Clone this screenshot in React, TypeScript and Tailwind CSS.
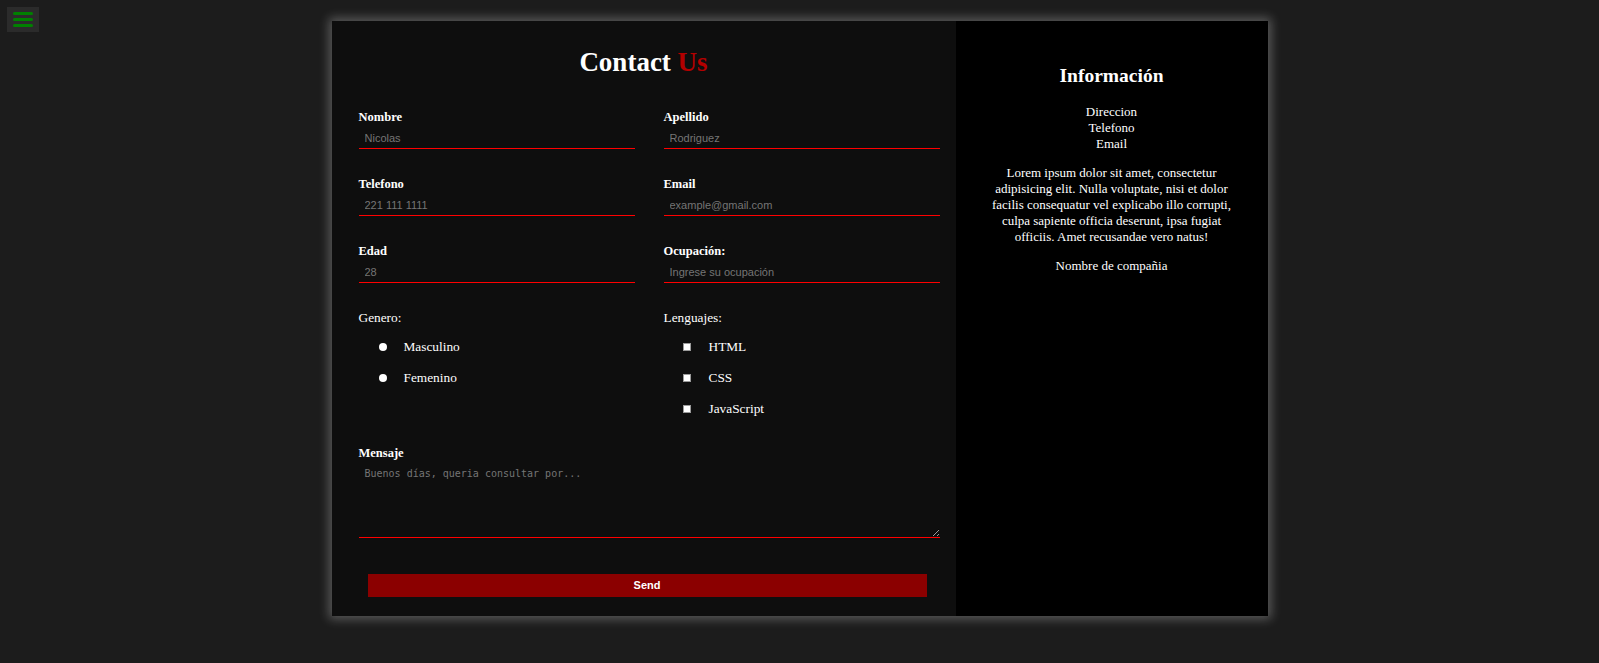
import { useState } from "react";

const fields = [
  { label: "Nombre", placeholder: "Nicolas", type: "text" },
  { label: "Apellido", placeholder: "Rodriguez", type: "text" },
  { label: "Telefono", placeholder: "221 111 1111", type: "tel" },
  { label: "Email", placeholder: "example@gmail.com", type: "email" },
  { label: "Edad", placeholder: "28", type: "number" },
  { label: "Ocupación:", placeholder: "Ingrese su ocupación", type: "text" },
];

function Field({ label, placeholder, type }: { label: string; placeholder: string; type: string }) {
  return (
    <div className="flex flex-col">
      <label className="block text-[12.5px] leading-[15px] font-bold text-white">{label}</label>
      <input
        type={type}
        placeholder={placeholder}
        className="h-[24px] w-full bg-transparent border-b border-[#ff0000] pl-[6px] pt-[3px] text-[11px] text-white font-['Liberation_Sans',Arial,sans-serif] placeholder:text-[#757575] outline-none"
      />
    </div>
  );
}

export default function App() {
  const [genero, setGenero] = useState("");

  return (
    <div className="min-h-screen w-full bg-[#1c1c1c] pt-[21px] pb-[47px] font-['Liberation_Serif','Times_New_Roman',serif]">
      <button className="fixed top-[7px] left-[7px] w-[32px] h-[25px] bg-[#2b2b2b] flex flex-col items-center justify-center gap-[3px]">
        <span className="block w-[20px] h-[3px] rounded-full bg-[#008000]" />
        <span className="block w-[20px] h-[3px] rounded-full bg-[#008000]" />
        <span className="block w-[20px] h-[3px] rounded-full bg-[#008000]" />
      </button>

      <div className="mx-auto w-[936px] h-[595px] flex shadow-[0_0_10px_3px_rgba(255,255,255,0.28)]">
        {/* formulario */}
        <form className="w-[624px] bg-[#0e0e0e] pt-[26px]" onSubmit={(e) => e.preventDefault()}>
          <h1 className="text-center text-[27px] leading-[31px] font-bold text-white">
            Contact <span className="text-[#b30000]">Us</span>
          </h1>

          <div className="pl-[27px] pr-[16px] mt-[32px]">
            <div className="grid grid-cols-2 gap-x-[29px] gap-y-[28px]">
              {fields.map((f) => (
                <Field key={f.label} {...f} />
              ))}
            </div>

            <div className="grid grid-cols-2 gap-x-[29px] mt-[27px]">
              <div>
                <p className="text-[13.33px] leading-[15px] text-white">Genero:</p>
                <div className="mt-[6px]">
                  {["Masculino", "Femenino"].map((g) => (
                    <label key={g} className="flex items-center h-[31px] pl-[20px] gap-[17px] text-[13.33px] text-white">
                      <input
                        type="radio"
                        name="genero"
                        checked={genero === g}
                        onChange={() => setGenero(g)}
                        className="appearance-none w-[8px] h-[8px] rounded-full bg-white"
                      />
                      {g}
                    </label>
                  ))}
                </div>
              </div>
              <div>
                <p className="text-[13.33px] leading-[15px] text-white">Lenguajes:</p>
                <div className="mt-[6px]">
                  {["HTML", "CSS", "JavaScript"].map((l) => (
                    <label key={l} className="flex items-center h-[31px] pl-[19px] gap-[18px] text-[13.33px] text-white">
                      <input
                        type="checkbox"
                        className="appearance-none w-[8px] h-[8px] bg-white border border-[#9a9a9a]"
                      />
                      {l}
                    </label>
                  ))}
                </div>
              </div>
            </div>

            <div className="mt-[22px]">
              <label className="block text-[12.5px] leading-[15px] font-bold text-white">Mensaje</label>
              <textarea
                placeholder="Buenos días, queria consultar por..."
                className="block w-full h-[77px] bg-transparent border-b border-[#ff0000] pl-[6px] pt-[5px] text-[10px] text-white font-['DejaVu_Sans_Mono',monospace] placeholder:text-[#757575] outline-none [color-scheme:dark]"
              />
            </div>

            <div className="flex mt-[36px] pl-[9px]">
              <button
                type="submit"
                className="w-[559px] h-[23px] bg-[#8b0000] text-white text-[11px] font-bold font-['Liberation_Sans',Arial,sans-serif]"
              >
                Send
              </button>
            </div>
          </div>
        </form>

        {/* info */}
        <div className="w-[312px] bg-black text-white text-center pt-[44px] px-[28px]">
          <h3 className="text-[19.5px] leading-[22px] font-bold">Información</h3>
          <div className="mt-[17px] text-[13px] leading-[16px]">
            <p>Direccion</p>
            <p>Telefono</p>
            <p>Email</p>
          </div>
          <p className="mt-[13px] text-[13px] leading-[16px]">
            Lorem ipsum dolor sit amet, consectetur adipisicing elit. Nulla voluptate, nisi et dolor facilis consequatur
            vel explicabo illo corrupti, culpa sapiente officia deserunt, ipsa fugiat officiis. Amet recusandae vero
            natus!
          </p>
          <p className="mt-[13px] text-[13px] leading-[16px]">Nombre de compañia</p>
        </div>
      </div>
    </div>
  );
}
